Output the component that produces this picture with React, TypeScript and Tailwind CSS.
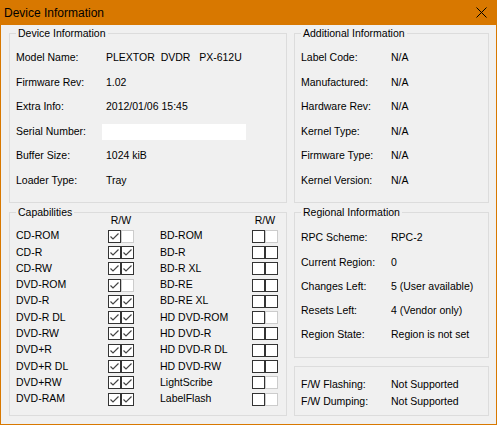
import React from "react";

type Cap = { name: string; r: "on" | "off" | "dis"; w: "on" | "off" | "dis" };

const leftCaps: Cap[] = [
  { name: "CD-ROM", r: "on", w: "dis" },
  { name: "CD-R", r: "on", w: "on" },
  { name: "CD-RW", r: "on", w: "on" },
  { name: "DVD-ROM", r: "on", w: "dis" },
  { name: "DVD-R", r: "on", w: "on" },
  { name: "DVD-R DL", r: "on", w: "on" },
  { name: "DVD-RW", r: "on", w: "on" },
  { name: "DVD+R", r: "on", w: "on" },
  { name: "DVD+R DL", r: "on", w: "on" },
  { name: "DVD+RW", r: "on", w: "on" },
  { name: "DVD-RAM", r: "on", w: "on" },
];

const rightCaps: Cap[] = [
  { name: "BD-ROM", r: "off", w: "dis" },
  { name: "BD-R", r: "off", w: "off" },
  { name: "BD-R XL", r: "off", w: "off" },
  { name: "BD-RE", r: "off", w: "off" },
  { name: "BD-RE XL", r: "off", w: "off" },
  { name: "HD DVD-ROM", r: "off", w: "dis" },
  { name: "HD DVD-R", r: "off", w: "off" },
  { name: "HD DVD-R DL", r: "off", w: "off" },
  { name: "HD DVD-RW", r: "off", w: "off" },
  { name: "LightScribe", r: "off", w: "dis" },
  { name: "LabelFlash", r: "off", w: "dis" },
];

function Group({ title, className, children }: { title?: string; className: string; children: React.ReactNode }) {
  return (
    <div className={`relative border border-[#dcdcdc] ${className}`}>
      {title && (
        <span className="absolute -top-[8px] left-[6px] bg-[#f0f0f0] px-[2px] leading-[14px]">{title}</span>
      )}
      {children}
    </div>
  );
}

function Row({ label, value, h = "h-[24.5px]" }: { label: string; value: React.ReactNode; h?: string }) {
  return (
    <div className={`flex items-center ${h}`}>
      <span className="w-[90px] shrink-0">{label}</span>
      <span className="whitespace-pre">{value}</span>
    </div>
  );
}

function Box({ state }: { state: "on" | "off" | "dis" }) {
  const border = state === "dis" ? "border-[#cccccc]" : "border-[#333333]";
  return (
    <div className={`w-[13px] h-[13px] border bg-white ${border} flex items-center justify-center`}>
      {state === "on" && (
        <svg width="11" height="11" viewBox="0 0 11 11">
          <path d="M1.5 5.5 L4 8 L9.5 2.5" fill="none" stroke="#444" strokeWidth="1.2" />
        </svg>
      )}
    </div>
  );
}

function CapColumn({ caps, className }: { caps: Cap[]; className: string }) {
  return (
    <div className={`flex flex-col ${className}`}>
      <div className="flex h-[14px] items-center">
        <span className="w-[92px]" />
        <span className="w-[26px] text-center">R/W</span>
      </div>
      {caps.map((c) => (
        <div key={c.name} className="flex items-center h-[16.3px]">
          <span className="w-[92px] shrink-0">{c.name}</span>
          <div className="flex">
            <Box state={c.r} />
            <Box state={c.w} />
          </div>
        </div>
      ))}
    </div>
  );
}

export default function App() {
  return (
    <div
      className="w-[497px] h-[425px] flex flex-col bg-[#f0f0f0] border-x border-b border-[#d87800] text-black text-[10.5px] overflow-hidden"
      style={{ fontFamily: '"Liberation Sans", Arial, sans-serif' }}
    >
      <div className="h-[25px] shrink-0 bg-[#d87800] flex items-center justify-between pl-[4px] pr-[10px] -mx-px">
        <span className="text-[12px] pt-px">Device Information</span>
        <svg width="11" height="11" viewBox="0 0 11 11">
          <path d="M0.5 0.5 L10.5 10.5 M10.5 0.5 L0.5 10.5" stroke="#000" strokeWidth="1" />
        </svg>
      </div>
      <div className="flex gap-[7px] pl-[8px] pr-[6px] pt-[8px]">
        <div className="flex flex-col gap-[9px] w-[278px]">
          <Group title="Device Information" className="h-[170px] pt-[12px] px-[6px]">
            <Row label="Model Name:" value="PLEXTOR  DVDR   PX-612U" />
            <Row label="Firmware Rev:" value="1.02" />
            <Row label="Extra Info:" value="2012/01/06 15:45" />
            <div className="flex items-center h-[24.5px]">
              <span className="w-[86px] shrink-0">Serial Number:</span>
              <div className="w-[144px] h-[16px] bg-white" />
            </div>
            <Row label="Buffer Size:" value="1024 kiB" />
            <Row label="Loader Type:" value="Tray" />
          </Group>
          <Group title="Capabilities" className="h-[204px] pt-[1px] px-[6px] flex">
            <CapColumn caps={leftCaps} className="w-[144px]" />
            <CapColumn caps={rightCaps} className="w-[120px]" />
          </Group>
        </div>
        <div className="flex flex-col w-[195px]">
          <Group title="Additional Information" className="h-[170px] pt-[12px] px-[6px]">
            <Row label="Label Code:" value="N/A" />
            <Row label="Manufactured:" value="N/A" />
            <Row label="Hardware Rev:" value="N/A" />
            <Row label="Kernel Type:" value="N/A" />
            <Row label="Firmware Type:" value="N/A" />
            <Row label="Kernel Version:" value="N/A" />
          </Group>
          <Group title="Regional Information" className="mt-[9px] h-[146px] pt-[13px] px-[6px]">
            <Row label="RPC Scheme:" value="RPC-2" h="h-[24.3px]" />
            <Row label="Current Region:" value="0" h="h-[24.3px]" />
            <Row label="Changes Left:" value="5 (User available)" h="h-[24.3px]" />
            <Row label="Resets Left:" value="4 (Vendor only)" h="h-[24.3px]" />
            <Row label="Region State:" value="Region is not set" h="h-[24.3px]" />
          </Group>
          <Group className="mt-[8px] h-[50px] pt-[9px] px-[6px]">
            <Row label="F/W Flashing:" value="Not Supported" h="h-[17px]" />
            <Row label="F/W Dumping:" value="Not Supported" h="h-[17px]" />
          </Group>
        </div>
      </div>
    </div>
  );
}
